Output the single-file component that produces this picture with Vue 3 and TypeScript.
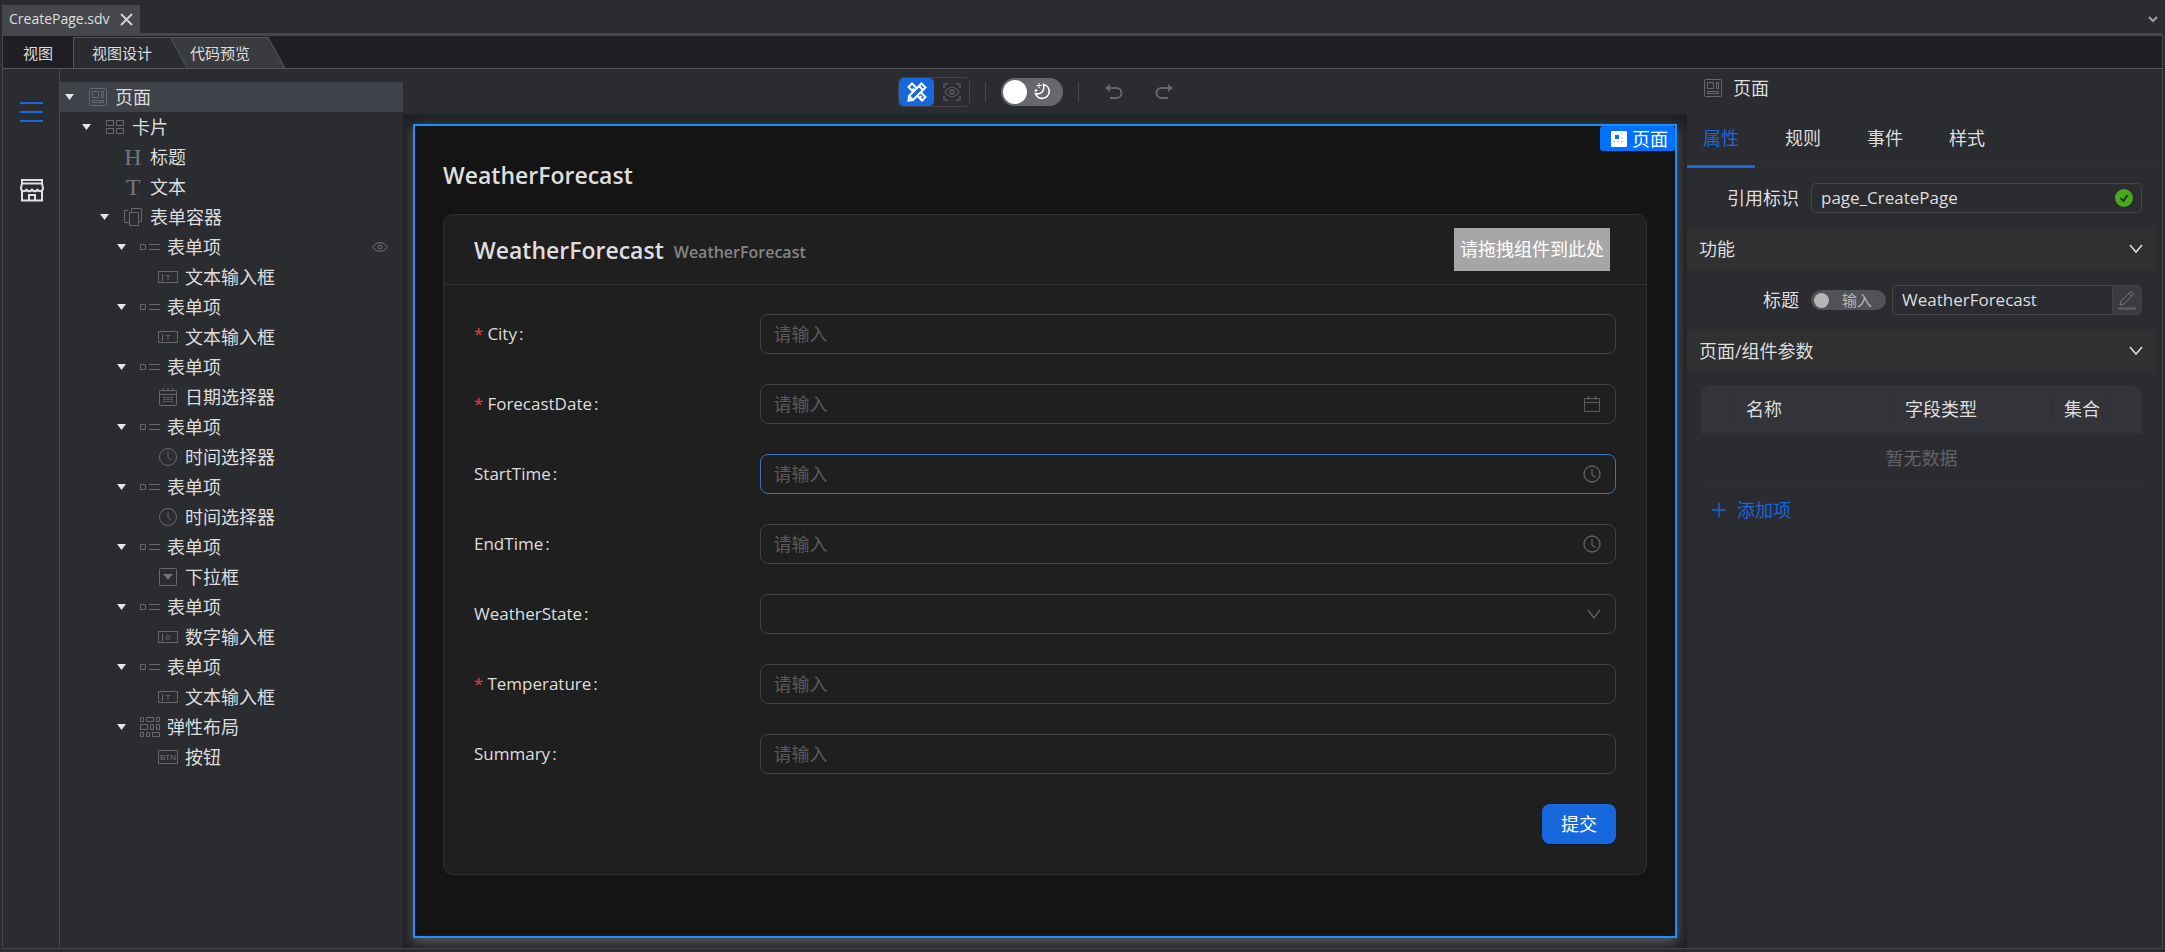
<script setup lang="ts">
import { ref } from 'vue'

interface TreeNode {
  label: string
  icon: string
  depth: number
  open?: boolean
  selected?: boolean
  eye?: boolean
}

interface FormField {
  id: string
  label: string
  required?: boolean
  kind: 'text' | 'date' | 'time' | 'select'
  active?: boolean
}

const indents = [0, 17, 35, 52, 70]

const tree: TreeNode[] = [
  { label: '页面', icon: 'page', depth: 0, open: true, selected: true },
  { label: '卡片', icon: 'card', depth: 1, open: true },
  { label: '标题', icon: 'heading', depth: 2 },
  { label: '文本', icon: 'text', depth: 2 },
  { label: '表单容器', icon: 'form', depth: 2, open: true },
  { label: '表单项', icon: 'item', depth: 3, open: true, eye: true },
  { label: '文本输入框', icon: 'input', depth: 4 },
  { label: '表单项', icon: 'item', depth: 3, open: true },
  { label: '文本输入框', icon: 'input', depth: 4 },
  { label: '表单项', icon: 'item', depth: 3, open: true },
  { label: '日期选择器', icon: 'date', depth: 4 },
  { label: '表单项', icon: 'item', depth: 3, open: true },
  { label: '时间选择器', icon: 'time', depth: 4 },
  { label: '表单项', icon: 'item', depth: 3, open: true },
  { label: '时间选择器', icon: 'time', depth: 4 },
  { label: '表单项', icon: 'item', depth: 3, open: true },
  { label: '下拉框', icon: 'select', depth: 4 },
  { label: '表单项', icon: 'item', depth: 3, open: true },
  { label: '数字输入框', icon: 'number', depth: 4 },
  { label: '表单项', icon: 'item', depth: 3, open: true },
  { label: '文本输入框', icon: 'input', depth: 4 },
  { label: '弹性布局', icon: 'flex', depth: 3, open: true },
  { label: '按钮', icon: 'button', depth: 4 },
]

const shapes: Record<string, string> = {
  page: 'M2.5 1.5h15a1 1 0 0 1 1 1v15a1 1 0 0 1-1 1h-15a1 1 0 0 1-1-1v-15a1 1 0 0 1 1-1zM4.500 4.500h6v6h-6zM13.500 4.500h2v6h-2zM4.500 13.500h11v2h-11z',
  card: 'M1.500 3.500h7v5h-7zM11.500 3.500h7v5h-7zM1.500 11.500h7v5h-7zM11.500 11.500h7v5h-7z',
  form: 'M6.500 15.500h-5v-12h4M8.500 4.500v-3h10v13h-3M6.500 5.500h9v13h-9z',
  item: 'M.5 7.500h5v5h-5zM9 7.500h11M9 12.500h11',
  input: 'M.5 4.500h19v11h-19zM4.500 7v7',
  number: 'M.5 4.500h19v11h-19zM4.500 7v7',
  date: 'M2.500 3.500h15a1 1 0 0 1 1 1v13a1 1 0 0 1-1 1h-15a1 1 0 0 1-1-1v-13a1 1 0 0 1 1-1zM1.500 7.500h17M5.500 1v3M10 1v3M14.500 1v3M5 10.500h2.500M8.500 10.500h3M12.500 10.500h2.500M5 12.500h2.500M8.500 12.500h3M12.500 12.500h2.500M5 14.500h2.500M8.500 14.500h3M12.500 14.500h2.500',
  time: 'M10 1.500a8.500 8.500 0 1 0 0 17a8.500 8.500 0 1 0 0-17zM10 5v5.500l3.500 2.500',
  select: 'M2.500 1.500h15a1 1 0 0 1 1 1v15a1 1 0 0 1-1 1h-15a1 1 0 0 1-1-1v-15a1 1 0 0 1 1-1z',
  flex: 'M.5 .5h3v4h-3zM6.500 .5h7v4h-7zM16.500 .5h3v4h-3zM.5 7.500h7v5h-7zM10.500 7.500h3v5h-3zM16.500 7.500h3v5h-3zM.5 15.500h3v4h-3zM6.500 15.500h3v4h-3zM12.500 15.500h7v4h-7z',
  button: 'M.5 3.500h19v13h-19z',
}

const letters: Record<string, { char: string; x: number; y: number; cls: string }> = {
  heading: { char: 'H', x: 10, y: 18, cls: 'glyph-serif' },
  text: { char: 'T', x: 10, y: 18, cls: 'glyph-serif' },
  input: { char: 'T', x: 10, y: 13, cls: 'glyph-small' },
  number: { char: '0', x: 10, y: 13, cls: 'glyph-small' },
  button: { char: 'BTN', x: 10, y: 13, cls: 'glyph-small' },
}

const fields: FormField[] = [
  { id: 'city', label: 'City', required: true, kind: 'text' },
  { id: 'forecast-date', label: 'ForecastDate', required: true, kind: 'date' },
  { id: 'start-time', label: 'StartTime', kind: 'time', active: true },
  { id: 'end-time', label: 'EndTime', kind: 'time' },
  { id: 'weather-state', label: 'WeatherState', kind: 'select' },
  { id: 'temperature', label: 'Temperature', required: true, kind: 'text' },
  { id: 'summary', label: 'Summary', kind: 'text' },
]

const tabs = ['属性', '规则', '事件', '样式']
const activeTab = ref('属性')
const refId = ref('page_CreatePage')
const title = ref('WeatherForecast')
</script>

<template>
  <div class="app">
    <header class="titlebar">
      <div class="file-tab">
        <span>CreatePage.sdv</span>
        <button class="bare" aria-label="关闭">
          <svg width="13" height="13" viewBox="0 0 13 13"><path d="M1 1l11 11M12 1L1 12" fill="none" stroke="#d0d1d3" stroke-width="2" /></svg>
        </button>
      </div>
      <button class="bare more" aria-label="更多">
        <svg width="10" height="7" viewBox="0 0 10 7"><path d="M1 1l4 4 4-4" fill="none" stroke="#a0a1a4" stroke-width="2" /></svg>
      </button>
    </header>

    <div class="frame">
      <nav class="viewbar">
        <span class="view-name">视图</span>
        <button class="view-tab design">视图设计</button>
        <svg class="slant" width="17" height="31" viewBox="0 0 17 31">
          <path d="M0 0H17V31Z" fill="#393b3f" />
          <path d="M0 0V31H17Z" fill="#2b2c30" />
          <path d="M0 .5H17M0 0L17 31" fill="none" stroke="#55575e" />
        </svg>
        <button class="view-tab code">代码预览</button>
        <svg class="slant" width="17" height="31" viewBox="0 0 17 31">
          <path d="M0 0V31H17Z" fill="#393b3f" />
          <path d="M0 0L17 31" fill="none" stroke="#55575e" />
        </svg>
      </nav>

      <div class="body">
        <aside class="rail">
          <button class="bare" aria-label="大纲">
            <svg width="24" height="24" viewBox="0 0 24 24"><path d="M0 3h23M0 12h23M0 21h23" fill="none" stroke="#1668dc" stroke-width="2" /></svg>
          </button>
          <button class="bare" aria-label="组件库">
            <svg width="24" height="24" viewBox="0 0 24 24" fill="none" stroke="#e0e0e0" stroke-width="2">
              <path d="M2 6V2h20v4M2 5.500h20L23 10c0 4-5 4-5.500 1c-.5 3-5 3-5.500 0c-.5 3-5 3-5.500 0C6 14 1 14 1 10zM2 13v9.500h20V13M9 22v-5h6v5" />
            </svg>
          </button>
        </aside>

        <ul class="tree">
          <li
            v-for="(node, i) in tree"
            :key="i"
            class="node"
            :class="{ selected: node.selected }"
            :style="{ paddingLeft: indents[node.depth] + 'px' }"
          >
            <span class="caret">
              <svg v-if="node.open" width="9" height="6" viewBox="0 0 9 6"><path d="M0 0h9L4.500 6z" fill="#e6e6e6" /></svg>
            </span>
            <svg class="node-icon" width="20" height="20" viewBox="0 0 20 20">
              <path v-if="shapes[node.icon]" :d="shapes[node.icon]" />
              <path v-if="node.icon === 'select'" d="M5 7h10l-5 6z" class="solid" />
              <text
                v-if="letters[node.icon]"
                :x="letters[node.icon].x"
                :y="letters[node.icon].y"
                :class="letters[node.icon].cls"
              >{{ letters[node.icon].char }}</text>
            </svg>
            <span class="node-label">{{ node.label }}</span>
            <button v-if="node.eye" class="bare node-eye" aria-label="显示">
              <svg width="16" height="10" viewBox="0 0 16 10" fill="none" stroke="#707275"><path d="M.5 5C4-.8 12-.8 15.500 5C12 10.800 4 10.800 .5 5z" /><circle cx="8" cy="5" r="2" /></svg>
            </button>
          </li>
        </ul>

        <main class="stage">
          <div class="toolbar">
            <div class="mode">
              <button class="mode-btn on" aria-label="设计">
                <svg width="20" height="20" viewBox="0 0 20 20" fill="none" stroke="#fff" stroke-width="2">
                  <path d="M1.500 5L5 1.500L18.500 15L15 18.500zM5 8.500l2-2M12.500 16l2-2" />
                  <path d="M14.500 1.500L18.500 5.500L6 18L1.500 18.500L2 14z" fill="#1668dc" />
                  <path d="M12 4l4 4M2 14l4 4" />
                </svg>
              </button>
              <button class="mode-btn" aria-label="预览">
                <svg width="18" height="18" viewBox="0 0 18 18" fill="none" stroke="#5a5c5f">
                  <path d="M1 5V2a1 1 0 0 1 1-1h3M13 1h3a1 1 0 0 1 1 1v3M17 13v3a1 1 0 0 1-1 1h-3M5 17H2a1 1 0 0 1-1-1v-3" stroke-width="1.500" />
                  <path d="M2 9C5 3 13 3 16 9C13 15 5 15 2 9z" stroke-width="1.200" />
                  <circle cx="9" cy="9" r="2" stroke-width="1.500" />
                </svg>
              </button>
            </div>
            <span class="rule"></span>
            <button class="theme" role="switch" aria-checked="false" aria-label="深色模式">
              <span class="knob"></span>
              <svg width="16" height="17" viewBox="0 0 16 17" fill="none" stroke="#fff">
                <path d="M9.500 1.500A7 7 0 1 1 1.500 10.500C7 12 11 8 9.500 1.500z" stroke-width="1.600" />
                <path d="M5 0v5M2.500 2.500h5M2 6v3M.5 7.500h3" />
              </svg>
            </button>
            <span class="rule"></span>
            <button class="tool" aria-label="撤销">
              <svg width="18" height="16" viewBox="0 0 18 16" fill="none" stroke="#66686b" stroke-width="2"><path d="M2 4h9.500a5 5 0 0 1 0 10H5" /><path d="M0 4L5 0v8z" fill="#66686b" stroke="none" /></svg>
            </button>
            <button class="tool" aria-label="重做">
              <svg width="18" height="16" viewBox="0 0 18 16" fill="none" stroke="#66686b" stroke-width="2"><path d="M16 4H6.500a5 5 0 0 0 0 10H13" /><path d="M18 4L13 0v8z" fill="#66686b" stroke="none" /></svg>
            </button>
          </div>

          <div class="canvas">
            <section class="page">
              <div class="badge">
                <svg width="18" height="18" viewBox="0 0 18 18">
                  <rect x="1" y="1" width="16" height="16" rx="1" fill="#fff" />
                  <rect x="5" y="5" width="4" height="4" fill="#0070ff" />
                  <path d="M12 3v6M3 11.500h12" stroke="#9cc6ff" stroke-dasharray="2 2" />
                </svg>
                <span>页面</span>
              </div>
              <h1 class="page-title">WeatherForecast</h1>
              <div class="card">
                <div class="card-head">
                  <h2 class="card-title">WeatherForecast</h2>
                  <span class="card-sub">WeatherForecast</span>
                  <div class="drop">请拖拽组件到此处</div>
                </div>
                <form class="form" @submit.prevent>
                  <div v-for="f in fields" :key="f.id" class="row">
                    <label class="row-label" :for="f.id">
                      <span v-if="f.required" class="star">*</span>
                      <span>{{ f.label }}</span>
                      <span class="colon">:</span>
                    </label>
                    <div class="control" :class="{ active: f.active }">
                      <select v-if="f.kind === 'select'" :id="f.id"></select>
                      <input v-else :id="f.id" type="text" placeholder="请输入" />
                      <svg v-if="f.kind === 'date'" width="18" height="18" viewBox="0 0 18 18"><path d="M1.500 3.500h15v13h-15zM1.500 7.500h15M5.500 1v4M12.500 1v4" fill="none" stroke="#5c5c5c" /></svg>
                      <svg v-if="f.kind === 'time'" width="18" height="18" viewBox="0 0 18 18"><path d="M9 1a8 8 0 1 0 0 16a8 8 0 1 0 0-16zM9 4v6l3.500 2.500" fill="none" stroke="#626262" stroke-width="1.300" /></svg>
                      <svg v-if="f.kind === 'select'" width="14" height="10" viewBox="0 0 14 10"><path d="M1 1l6 8 6-8" fill="none" stroke="#626262" stroke-width="1.300" /></svg>
                    </div>
                  </div>
                  <div class="actions"><button type="submit" class="submit">提交</button></div>
                </form>
              </div>
            </section>
          </div>
        </main>

        <aside class="props">
          <div class="props-head">
            <svg class="node-icon" width="20" height="20" viewBox="0 0 20 20"><path :d="shapes.page" /></svg>
            <span>页面</span>
          </div>
          <div class="tabs" role="tablist">
            <button
              v-for="t in tabs"
              :key="t"
              role="tab"
              class="tab"
              :class="{ on: t === activeTab }"
              :aria-selected="t === activeTab"
              @click="activeTab = t"
            >{{ t }}</button>
          </div>

          <div class="prop-row">
            <label class="prop-label" for="ref-id">引用标识</label>
            <div class="box grow">
              <input id="ref-id" v-model="refId" type="text" />
              <svg width="18" height="18" viewBox="0 0 18 18"><circle cx="9" cy="9" r="9" fill="#49aa19" /><path d="M5.500 9l3 3 4-6" fill="none" stroke="#24303a" stroke-width="2" /></svg>
            </div>
          </div>

          <button class="section">
            <span>功能</span>
            <svg width="14" height="10" viewBox="0 0 14 10"><path d="M1 1l6 7 6-7" fill="none" stroke="#e0e0e0" stroke-width="1.500" /></svg>
          </button>

          <div class="prop-row">
            <label class="prop-label" for="page-title">标题</label>
            <button class="switch" role="switch" aria-checked="false"><span class="dot"></span><span>输入</span></button>
            <div class="box joined grow"><input id="page-title" v-model="title" type="text" /></div>
            <button class="edit" aria-label="编辑">
              <svg width="20" height="20" viewBox="0 0 20 20" fill="none" stroke="#77797c"><path d="M3 15l1-4L14 1.500l2.500 2.500L7 14zM12 3.500L14.500 6" /><path d="M1 18.500h18" stroke-width="2" stroke="#606265" /></svg>
            </button>
          </div>

          <button class="section">
            <span>页面/组件参数</span>
            <svg width="14" height="10" viewBox="0 0 14 10"><path d="M1 1l6 7 6-7" fill="none" stroke="#e0e0e0" stroke-width="1.500" /></svg>
          </button>

          <table class="params">
            <colgroup><col class="c-mini" /><col /><col /><col class="c-set" /><col class="c-act" /></colgroup>
            <thead>
              <tr><th></th><th>名称</th><th>字段类型</th><th>集合</th><th></th></tr>
            </thead>
            <tbody>
              <tr><td colspan="5">暂无数据</td></tr>
            </tbody>
          </table>

          <button class="add">
            <svg width="16" height="16" viewBox="0 0 16 16"><path d="M8 1v14M1 8h14" fill="none" stroke="#1668dc" stroke-width="1.400" /></svg>
            <span>添加项</span>
          </button>
        </aside>
      </div>
    </div>
  </div>
</template>

<style>
html,
body {
  margin: 0;
  background: #2b2c30;
}
</style>

<style scoped>
.app {
  height: 100vh;
  box-sizing: border-box;
  padding: 0 2px 3px;
  display: flex;
  flex-direction: column;
  background: #2b2c30;
  color: #dedede;
  font-family: 'Open Sans', 'Noto Sans CJK SC', sans-serif;
  font-size: 18px;
  line-height: 28px;
}
.app *,
.app *::before {
  box-sizing: border-box;
}
button,
input,
select {
  font: inherit;
  color: inherit;
  margin: 0;
  padding: 0;
  border: 0;
  background: none;
  outline: none;
}
svg {
  display: block;
  flex: none;
}
.bare {
  display: flex;
}

/* title bar */
.titlebar {
  height: 36px;
  padding-top: 5px;
  border-bottom: 3px solid #45474c;
  display: flex;
  align-items: stretch;
  justify-content: space-between;
  font-size: 14px;
}
.file-tab {
  display: flex;
  align-items: center;
  gap: 10px;
  padding: 0 7px;
  background: #45474c;
}
.more {
  align-items: center;
  padding-right: 5px;
}
.frame {
  flex: 1;
  min-height: 0;
  display: flex;
  flex-direction: column;
  border: 1px solid #45474c;
  border-top: 0;
}

/* view tabs */
.viewbar {
  height: 33px;
  flex: none;
  display: flex;
  align-items: flex-end;
  border-bottom: 1px solid #55575e;
  background: #1e1f22;
  font-size: 15px;
  line-height: 30px;
}
.view-name {
  width: 70px;
  padding-left: 20px;
}
.view-tab {
  border-top: 1px solid #55575e;
  line-height: 30px;
}
.design {
  border-left: 1px solid #55575e;
  padding: 0 18px;
  background: #2b2c30;
}
.code {
  padding: 0 18px 0 3px;
  background: #393b3f;
}

.body {
  flex: 1;
  min-height: 0;
  display: flex;
}
.rail {
  width: 57px;
  flex: none;
  border-right: 1px solid #45474c;
  padding: 31px 0 0 1px;
  display: flex;
  flex-direction: column;
  align-items: center;
  gap: 54px;
}

/* outline tree */
.tree {
  width: 343px;
  flex: none;
  margin: 0;
  padding: 13px 0 0;
  list-style: none;
}
.node {
  display: flex;
  align-items: center;
  height: 30px;
}
.node.selected {
  background: #404249;
}
.caret {
  width: 19px;
  display: flex;
  justify-content: center;
}
.node-icon {
  margin: 0 7px 0 9px;
  overflow: visible;
  fill: none;
  stroke: #67696c;
}
.node-icon .solid {
  fill: #707275;
  stroke: none;
}
.node-icon text {
  fill: #74767a;
  stroke: none;
  text-anchor: middle;
}
.glyph-serif {
  font: 24px 'Liberation Serif', serif;
}
.glyph-small {
  font: 8px 'Liberation Sans', sans-serif;
}
.node-eye {
  margin-left: auto;
  margin-right: 15px;
}

/* design stage */
.stage {
  flex: 1;
  min-width: 0;
  display: flex;
  flex-direction: column;
}
.toolbar {
  height: 45px;
  flex: none;
  padding-left: 2px;
  display: flex;
  align-items: center;
  justify-content: center;
}
.mode {
  display: flex;
  height: 30px;
  border: 1px solid #424448;
  border-radius: 5px;
}
.mode-btn {
  width: 35px;
  display: flex;
  align-items: center;
  justify-content: center;
}
.mode-btn.on {
  background: #1668dc;
  border-radius: 5px;
}
.rule {
  width: 1px;
  height: 20px;
  margin: 0 15px;
  background: #46484b;
}
.theme {
  width: 62px;
  height: 28px;
  padding: 0 13px 0 2px;
  border-radius: 14px;
  background: #66686b;
  display: flex;
  align-items: center;
  justify-content: space-between;
}
.knob {
  width: 24px;
  height: 24px;
  border-radius: 50%;
  background: #fff;
}
.tool {
  width: 40px;
  height: 28px;
  margin-right: 10px;
  display: flex;
  align-items: center;
  justify-content: center;
}
.canvas {
  flex: 1;
  min-height: 0;
  padding: 10px;
  display: flex;
  background: #202124;
  overflow: hidden;
}
.page {
  position: relative;
  flex: 1;
  min-width: 0;
  padding: 28px;
  border: 2px solid #1890ff;
  background: #141414;
  box-shadow: 0 4px 12px rgba(255, 255, 255, 0.28);
}
.badge {
  position: absolute;
  top: 0;
  right: 0;
  height: 25px;
  padding: 0 7px 0 10px;
  border-radius: 3px;
  display: flex;
  align-items: center;
  gap: 4px;
  background: #0070ff;
  color: #fff;
}
.page-title {
  margin: 0 0 18px;
  font-size: 23px;
  font-weight: 600;
  line-height: 42px;
}
.card {
  border: 1px solid #303030;
  border-radius: 10px;
  background: #1f1f1f;
}
.card-head {
  height: 70px;
  padding: 0 36px 0 30px;
  border-bottom: 1px solid #303030;
  display: flex;
  align-items: center;
  gap: 10px;
}
.card-title {
  margin: 0;
  font-size: 23px;
  font-weight: 600;
}
.card-sub {
  padding-top: 4px;
  color: #858585;
  font-size: 16px;
  font-weight: 600;
}
.drop {
  margin-left: auto;
  padding: 0 6px;
  line-height: 43px;
  background: #a6a6a6;
  color: #fff;
}
.form {
  display: grid;
  gap: 30px;
  padding: 29px 30px 30px;
}
.row {
  display: grid;
  grid-template-columns: 1fr 3fr;
  align-items: center;
}
.row-label {
  display: flex;
  font-size: 17px;
}
.star {
  margin-right: 4px;
  color: #dc4446;
}
.colon {
  margin-left: 2px;
}
.control {
  height: 40px;
  padding: 0 14px 0 13px;
  display: flex;
  align-items: center;
  border: 1px solid #424242;
  border-radius: 8px;
}
.control.active {
  border-color: #3a73be;
}
.control input,
.control select {
  flex: 1;
  min-width: 0;
  appearance: none;
}
.control input::placeholder {
  color: #595959;
  opacity: 1;
}
.actions {
  display: flex;
  justify-content: flex-end;
}
.submit {
  height: 40px;
  padding: 0 19px;
  border-radius: 8px;
  background: #1668dc;
  box-shadow: 0 2px 0 #111a2c;
  color: #fff;
}

/* property panel */
.props {
  width: 475px;
  flex: none;
}
.props-head {
  height: 38px;
  display: flex;
  align-items: center;
  padding-left: 7px;
}
.props-head span {
  margin-left: 3px;
}
.tabs {
  height: 61px;
  display: flex;
  gap: 14px;
  border-bottom: 1px solid #313132;
}
.tab {
  height: 61px;
  padding: 4px 16px 0;
  border-bottom: 3px solid transparent;
}
.tab.on {
  color: #1668dc;
  border-bottom-color: #1668dc;
}
.prop-row {
  height: 60px;
  padding: 0 20px 0 0;
  display: flex;
  align-items: center;
}
.prop-label {
  width: 124px;
  padding-right: 12px;
  text-align: right;
}
.grow {
  flex: 1;
  min-width: 0;
}
.box {
  height: 30px;
  padding: 0 8px 0 9px;
  display: flex;
  align-items: center;
  border: 1px solid #424448;
  border-radius: 5px;
  font-size: 17px;
}
.box input {
  flex: 1;
  min-width: 0;
  width: 0;
}
.joined {
  border-radius: 5px 0 0 5px;
}
.switch {
  width: 75px;
  height: 20px;
  margin-right: 6px;
  padding: 0 14px 0 3px;
  border-radius: 10px;
  background: #515256;
  color: #b5b6b8;
  font-size: 15px;
  line-height: 20px;
  display: flex;
  align-items: center;
  justify-content: space-between;
}
.dot {
  width: 15px;
  height: 15px;
  border-radius: 50%;
  background: #b5b5b6;
}
.edit {
  width: 29px;
  height: 30px;
  border: 1px solid #424448;
  border-left: 0;
  border-radius: 0 5px 5px 0;
  background: #3b3c40;
  display: flex;
  align-items: center;
  justify-content: center;
}
.section {
  width: calc(100% - 6px);
  height: 42px;
  padding: 0 13px 0 12px;
  display: flex;
  align-items: center;
  justify-content: space-between;
  background: #303030;
}
.params {
  width: calc(100% - 34px);
  margin: 13px 20px 0 14px;
  table-layout: fixed;
  border-collapse: separate;
  border-spacing: 0;
}
.c-mini {
  width: 34px;
}
.c-set {
  width: 57px;
}
.c-act {
  width: 32px;
}
.params th {
  position: relative;
  height: 49px;
  padding: 0 0 0 11px;
  background: #333439;
  border-bottom: 1px solid #313235;
  font-weight: 400;
  text-align: left;
  white-space: nowrap;
}
.params th:not(:last-child)::before {
  content: '';
  position: absolute;
  right: 0;
  top: 10px;
  width: 1px;
  height: 28px;
  background: #2e2f31;
}
.params th:first-child {
  border-top-left-radius: 10px;
}
.params th:last-child {
  border-top-right-radius: 10px;
}
.params td {
  height: 48px;
  padding: 0;
  border-bottom: 1px solid #303134;
  color: #626366;
  text-align: center;
}
.add {
  margin: 14px 0 0 24px;
  display: flex;
  align-items: center;
  gap: 10px;
  color: #1668dc;
}
</style>
